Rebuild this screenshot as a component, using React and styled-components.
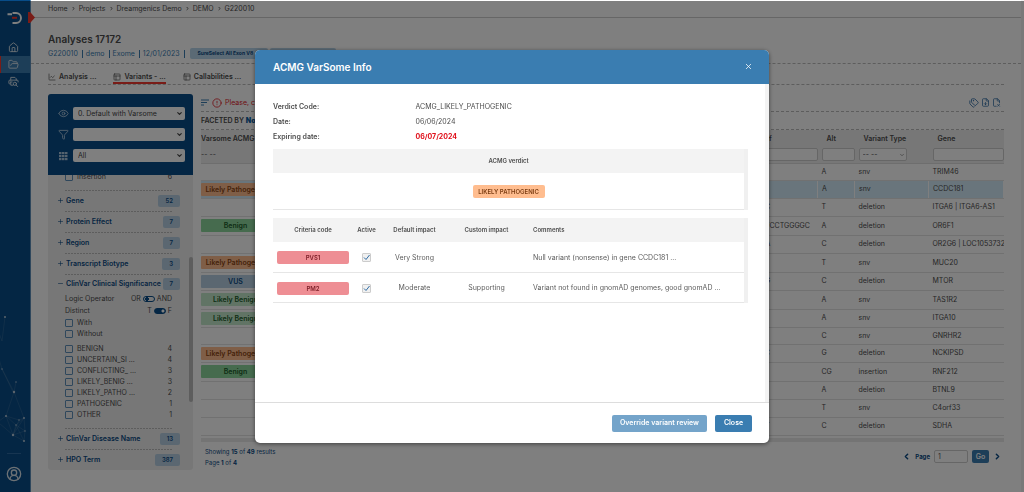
import styled, { createGlobalStyle, css } from "styled-components";
import { House, FolderOpen, CircleUserRound, PanelsTopLeft, ChartLine, Eye, Filter, Tags, FileDown, FileX2, ChevronLeft, ChevronRight, ChevronDown, X, Plus, Minus, CircleAlert } from "lucide-react";

const crumbs = ["Home", "Projects", "Dreamgenics Demo", "DEMO", "G220010"];

const tabs = [
  { label: "Analysis ...", icon: ChartLine },
  { label: "Variants - ...", icon: PanelsTopLeft, active: true },
  { label: "Callabilities ...", icon: PanelsTopLeft },
];

const facets = [
  { name: "Gene", count: 52 },
  { name: "Protein Effect", count: 7 },
  { name: "Region", count: 7 },
  { name: "Transcript Biotype", count: 3 },
];

const lastFacets = [
  { name: "ClinVar Disease Name", count: 13 },
  { name: "HPO Term", count: 387 },
];

const significances = [
  { name: "BENIGN", count: 4 },
  { name: "UNCERTAIN_SI ...", count: 4 },
  { name: "CONFLICTING_ ...", count: 3 },
  { name: "LIKELY_BENIG ...", count: 3 },
  { name: "LIKELY_PATHO ...", count: 2 },
  { name: "PATHOGENIC", count: 1 },
  { name: "OTHER", count: 1 },
];

const variants = [
  { ref: "G", alt: "A", type: "snv", gene: "TRIM46", size: "short" },
  { verdict: "Likely Pathogenic", ref: "G", alt: "A", type: "snv", gene: "CCDC181", selected: true },
  { ref: "CTC", alt: "T", type: "deletion", gene: "ITGA6 | ITGA6-AS1" },
  { verdict: "Benign", ref: "AGTCCTGGGGC", alt: "A", type: "deletion", gene: "OR6F1", size: "tall" },
  { ref: "CCA", alt: "C", type: "deletion", gene: "OR2G6 | LOC105373277" },
  { verdict: "Likely Pathogenic", ref: "C", alt: "T", type: "snv", gene: "MUC20", size: "tall" },
  { verdict: "VUS", ref: "CTG", alt: "C", type: "deletion", gene: "MTOR" },
  { verdict: "Likely Benign", ref: "G", alt: "A", type: "snv", gene: "TAS1R2", size: "tall" },
  { verdict: "Likely Benign", ref: "G", alt: "A", type: "snv", gene: "ITGA10" },
  { ref: "T", alt: "C", type: "snv", gene: "GNRHR2", size: "short" },
  { verdict: "Likely Pathogenic", ref: "GTC", alt: "G", type: "deletion", gene: "NCKIPSD" },
  { verdict: "Benign", ref: "C", alt: "CG", type: "insertion", gene: "RNF212", size: "tall" },
  { ref: "AT", alt: "A", type: "deletion", gene: "BTNL9" },
  { ref: "C", alt: "T", type: "snv", gene: "C4orf33" },
  { ref: "CTT", alt: "C", type: "deletion", gene: "SDHA" },
];

const criteria = [
  { code: "PVS1", impact: "Very Strong", custom: "", comment: "Null variant (nonsense) in gene CCDC181 ..." },
  { code: "PM2", impact: "Moderate", custom: "Supporting", comment: "Variant not found in gnomAD genomes, good gnomAD ..." },
];

const Logo = () => (
  <svg width="16" height="14" viewBox="0 0 16 14" fill="none">
    <path d="M0.500 3.200h4.500M5.500 2h3.500a5 5 0 0 1 0 10H5.500" stroke="#fff" strokeWidth="1.900" />
    <path d="M5 6.800h5" stroke="#f2392f" strokeWidth="2" />
  </svg>
);

const ReportSearch = () => (
  <svg width="11" height="11" viewBox="0 0 24 24" fill="none" stroke="currentColor" strokeWidth="2" strokeLinecap="round" strokeLinejoin="round">
    <path d="M6 9V3h9l3 3v3M11 20H6v-6M4 17H3a1 1 0 0 1-1-1v-5a2 2 0 0 1 2-2h16a2 2 0 0 1 2 2v2" />
    <path d="M5 13h4" />
    <circle cx="15" cy="17" r="3.500" />
    <path d="m18 20 3 3" />
  </svg>
);

const GridIcon = () => (
  <svg width="10" height="10" viewBox="0 0 10 10" fill="currentColor">
    {[1, 4, 7].map((y) => [0, 3, 6].map((x) => <rect key={`${x}-${y}`} x={x + 1} y={y} width="2.500" height="2.200" />))}
  </svg>
);

const Network = () => (
  <svg width="30" height="150" viewBox="0 0 30 150" stroke="#5f88ab" strokeWidth="0.3" fill="none">
    <path d="M6 14 3 38M3 38 0 30M3 66 0 56M3 66l12 23M17 79l-2 10M3 66 14 89M15 89 7 113M15 89l10 26M7 113l7 19M7 113l10 9M7 113 0 118M14 132l3-10M14 132l11-17M14 132l12-4M14 132l11 6M17 122l8-7M17 122l9 6M17 122l8 16M25 115l1 13M26 128l-1 10M20 117l5-2M20 117 14 132M7 113l13 4M14 132 0 120" />
    <g fill="#b5c8da" stroke="none">
      <circle cx="6" cy="14" r="1" />
      <circle cx="3" cy="66" r="0.7" />
      <circle cx="17" cy="79" r="0.7" />
      <circle cx="15" cy="89" r="1.2" />
      <circle cx="7" cy="113" r="1" />
      <circle cx="14" cy="132" r="1.2" />
      <circle cx="17" cy="122" r="0.7" />
      <circle cx="20" cy="117" r="0.7" />
      <circle cx="25" cy="115" r="0.9" />
      <circle cx="26" cy="128" r="0.7" />
      <circle cx="25" cy="138" r="1" />
    </g>
  </svg>
);

const FacetRow = ({ name, count, open }) => (
  <Facet $open={open}>
    <FacetToggle type="button">
      {open ? <Minus size={7} /> : <Plus size={7} />}
      {name}
    </FacetToggle>
    <Count>{count}</Count>
  </Facet>
);

const App = () => {
  return (
    <>
      <GlobalStyle />
      <Page>
        <Sidebar>
          <LogoBox><Logo /><Marker /></LogoBox>
          <NavItem href="#home" aria-label="Home"><House size={11} /></NavItem>
          <NavItem href="#projects" aria-label="Projects" $active><FolderOpen size={11} /></NavItem>
          <NavItem href="#search" aria-label="Search"><ReportSearch /></NavItem>
          <SidebarFoot>
            <Network />
            <Rule />
            <CircleUserRound size={16} strokeWidth={2} />
          </SidebarFoot>
        </Sidebar>
        <Main>
          <Breadcrumb>
            {crumbs.map((crumb, i) => (
              <span key={crumb}>
                {i > 0 && <ChevronRight size={5} strokeWidth={4} />}
                <a href={`#${crumb}`}>{crumb}</a>
              </span>
            ))}
          </Breadcrumb>
          <Heading>
            <h1>Analyses 17172</h1>
            <Meta>
              <span>G220010</span>
              <span>demo</span>
              <span>Exome</span>
              <span>12/01/2023</span>
              <Kit>SureSelect All Exon V8</Kit>
              <Kit />
            </Meta>
          </Heading>
          <Tabs>
            {tabs.map(({ label, icon: Icon, active }) => (
              <Tab key={label} href="#tab" $active={active}>
                <Icon size={8} />
                {label}
              </Tab>
            ))}
          </Tabs>
          <Content>
            <Filters>
              <FilterBox>
                <FilterLine>
                  <Eye size={11} />
                  <SelectWrap>
                    <select aria-label="View"><option>0. Default with Varsome</option></select>
                    <ChevronDown size={7} strokeWidth={4} />
                  </SelectWrap>
                </FilterLine>
                <FilterLine>
                  <Filter size={11} />
                  <SelectWrap>
                    <select aria-label="Filter"><option></option></select>
                    <ChevronDown size={7} strokeWidth={4} />
                  </SelectWrap>
                </FilterLine>
                <FilterLine>
                  <GridIcon />
                  <SelectWrap>
                    <select aria-label="Group"><option>All</option></select>
                    <ChevronDown size={7} strokeWidth={4} />
                  </SelectWrap>
                </FilterLine>
              </FilterBox>
              <FacetList>
                <CutOff>
                  <Option><input type="checkbox" />Insertion<b>6</b></Option>
                </CutOff>
                {facets.map((facet) => <FacetRow key={facet.name} {...facet} />)}
                <FacetRow name="ClinVar Clinical Significance" count={7} open />
                <SwitchLine>
                  Logic Operator
                  <label>OR<input type="checkbox" role="switch" />AND</label>
                </SwitchLine>
                <SwitchLine>
                  Distinct
                  <label>T<input type="checkbox" role="switch" defaultChecked />F</label>
                </SwitchLine>
                <Option><input type="checkbox" />With</Option>
                <Option><input type="checkbox" />Without</Option>
                <OptionGroup>
                  {significances.map(({ name, count }) => (
                    <Option key={name}><input type="checkbox" />{name}<b>{count}</b></Option>
                  ))}
                </OptionGroup>
                {lastFacets.map((facet) => <FacetRow key={facet.name} {...facet} />)}
                <Thumb />
              </FacetList>
            </Filters>
            <Results>
              <Toolbar>
                <SortIcon width="8" height="7" viewBox="0 0 8 7"><path d="M0 1h8M0 3.500h6M0 6h3" /></SortIcon>
                <CircleAlert size={10} />
                <p>Please, check</p>
                <Tools>
                  <Tags size={10} />
                  <FileDown size={9} />
                  <FileX2 size={9} />
                </Tools>
              </Toolbar>
              <Faceted>FACETED BY <b>None</b></Faceted>
              <VariantTable>
                <colgroup>
                  <col width="69" />
                  <col />
                  <col width="66" />
                  <col width="37" />
                  <col width="74" />
                  <col width="75" />
                </colgroup>
                <thead>
                  <tr>
                    <th>Varsome ACMG V</th>
                    <th></th>
                    <th>Ref</th>
                    <th>Alt</th>
                    <th>Variant Type</th>
                    <th>Gene</th>
                  </tr>
                  <tr>
                    <td>-- --</td>
                    <td></td>
                    <td><input aria-label="Ref" /></td>
                    <td><input aria-label="Alt" /></td>
                    <td>
                      <TypeSelect>
                        <select aria-label="Variant Type"><option>-- --</option></select>
                        <ChevronDown size={6} />
                      </TypeSelect>
                    </td>
                    <td><input aria-label="Gene" /></td>
                  </tr>
                </thead>
                <tbody>
                  {variants.map((row) => (
                    <VariantRow key={row.gene} $selected={row.selected} $size={row.size}>
                      <td>{row.verdict && <Verdict $kind={row.verdict}>{row.verdict}</Verdict>}</td>
                      <td></td>
                      <td>{row.ref}</td>
                      <td>{row.alt}</td>
                      <td>{row.type}</td>
                      <td>{row.gene}</td>
                    </VariantRow>
                  ))}
                </tbody>
              </VariantTable>
              <ScrollTrack />
              <Pager>
                <Summary>
                  <p>Showing <b>15</b> of <b>49</b> results</p>
                  <p>Page <b>1</b> of <b>4</b></p>
                </Summary>
                <ChevronLeft size={9} strokeWidth={4} />
                <label htmlFor="page">Page</label>
                <input id="page" defaultValue="1" />
                <GoButton type="button">Go</GoButton>
                <ChevronRight size={9} strokeWidth={4} />
              </Pager>
            </Results>
          </Content>
        </Main>
      </Page>
      <Overlay>
        <Modal role="dialog" aria-labelledby="modal-title">
          <ModalHeader>
            <h2 id="modal-title">ACMG VarSome Info</h2>
            <button type="button" aria-label="Dismiss"><X size={9} strokeWidth={2} /></button>
          </ModalHeader>
          <ModalBody>
            <Details>
              <dt>Verdict Code:</dt>
              <dd>ACMG_LIKELY_PATHOGENIC</dd>
              <dt>Date:</dt>
              <dd>06/06/2024</dd>
              <dt>Expiring date:</dt>
              <Expired>06/07/2024</Expired>
            </Details>
            <Panel>
              <InfoTable>
                <thead>
                  <tr><th>ACMG verdict</th></tr>
                </thead>
                <tbody>
                  <InfoRow $height={37}>
                    <td><Tag $kind="likely">LIKELY PATHOGENIC</Tag></td>
                  </InfoRow>
                </tbody>
              </InfoTable>
            </Panel>
            <Panel>
              <InfoTable>
                <colgroup>
                  <col width="80" />
                  <col width="27" />
                  <col width="69" />
                  <col width="75" />
                  <col />
                </colgroup>
                <thead>
                  <tr>
                    <th>Criteria code</th>
                    <th>Active</th>
                    <th>Default impact</th>
                    <th>Custom impact</th>
                    <Comment as="th">Comments</Comment>
                  </tr>
                </thead>
                <tbody>
                  {criteria.map(({ code, impact, custom, comment }) => (
                    <InfoRow key={code} $height={30}>
                      <td><Tag $kind="pathogenic">{code}</Tag></td>
                      <td>
                        <Tick>
                          <input type="checkbox" aria-label={`${code} active`} defaultChecked />
                          <svg width="7" height="7" viewBox="0 0 7 7"><path d="M1 3.500l2 2L6.500 1" /></svg>
                        </Tick>
                      </td>
                      <td>{impact}</td>
                      <td>{custom}</td>
                      <Comment>{comment}</Comment>
                    </InfoRow>
                  ))}
                </tbody>
              </InfoTable>
            </Panel>
          </ModalBody>
          <ModalFooter>
            <ModalButton type="button" disabled>Override variant review</ModalButton>
            <ModalButton type="button">Close</ModalButton>
          </ModalFooter>
        </Modal>
      </Overlay>
    </>
  );
};

export default App;

const GlobalStyle = createGlobalStyle`
* {
  box-sizing: border-box;
}
body {
  margin: 0;
  background: #fff;
  color: #4c4c4c;
  font-family: Inter, sans-serif;
  font-size: 7px;
  line-height: 10px;
}
h1, h2, p, dl, dd {
  margin: 0;
}
input, select, button {
  font: inherit;
  color: inherit;
  margin: 0;
}
a {
  color: inherit;
  text-decoration: none;
}
svg {
  flex: none;
}
`;

const check = css`
  appearance: none;
  width: 8px;
  height: 8px;
  border: 1px solid #5f8fb8;
  border-radius: 1px;
`;

const Page = styled.div`
  display: flex;
  min-height: 100vh;
`;

const Sidebar = styled.nav`
  width: 31px;
  flex: none;
  display: flex;
  flex-direction: column;
  background: #084c88;
  border-right: 1px solid #5f8fb8;
  color: #d8e2ea;
`;

const LogoBox = styled.div`
  position: relative;
  height: 39px;
  padding: 11px 7px;
`;

const Marker = styled.span`
  position: absolute;
  left: 28px;
  top: 12px;
  width: 7px;
  height: 11px;
  background: #f2392f;
  clip-path: polygon(0 0, 30% 0, 100% 50%, 30% 100%, 0 100%);
`;

const NavItem = styled.a`
  display: flex;
  align-items: center;
  justify-content: center;
  height: 17px;
  padding-right: 5px;
  border-left: 1px solid ${({ $active }) => ($active ? "#f2392f" : "transparent")};
  background: ${({ $active }) => ($active ? "#3a7db1" : "transparent")};
`;

const SidebarFoot = styled.div`
  margin-top: auto;
  display: flex;
  flex-direction: column;
  align-items: center;
  padding-bottom: 10px;
  padding-right: 2px;
`;

const Rule = styled.hr`
  width: 14px;
  margin: 0 0 12px;
  border: 0;
  border-top: 1px solid #2f6ba3;
`;

const Main = styled.main`
  flex: 1;
  min-width: 0;
  border-right: 3px solid #f3f3f3;
`;

const Breadcrumb = styled.nav`
  height: 18px;
  display: flex;
  align-items: center;
  padding-left: 17px;
  border-bottom: 1px solid #ccc;

  span {
    display: flex;
    align-items: center;
  }
  svg {
    margin: 0 3px;
  }
`;

const Heading = styled.header`
  height: 46px;
  padding: 14px 17px 0;
  border-bottom: 1px dashed #bbb;

  h1 {
    font-size: 10px;
    line-height: 14px;
    font-weight: 600;
  }
`;

const Meta = styled.div`
  display: flex;
  align-items: center;
  height: 15px;
  color: #3a7db1;
  white-space: nowrap;

  > span {
    padding-right: 4px;
    margin-right: 3px;
    border-right: 1px solid #3a7db1;
    line-height: 8px;
  }
`;

const Kit = styled.b`
  width: 78px;
  height: 11px;
  margin-left: 2px;
  padding-left: 8px;
  border-radius: 2px;
  background: #b6d4ea;
  color: #0b4a84;
  font-size: 5px;

  & + & {
    width: 66px;
  }
`;

const Tabs = styled.nav`
  display: flex;
  gap: 17px;
  height: 21px;
  margin: 0 17px;
  border-bottom: 1px dashed #bbb;
`;

const Tab = styled.a`
  display: flex;
  align-items: center;
  gap: 3px;
  padding-top: 8px;
  font-weight: 600;
  border-bottom: 2px solid ${({ $active }) => ($active ? "#f2392f" : "transparent")};
`;

const Content = styled.div`
  display: flex;
  align-items: flex-start;
  gap: 8px;
  padding: 9px 17px 0;
`;

const Filters = styled.aside`
  width: 145px;
  flex: none;
  border-radius: 3px;
  overflow: hidden;
  background: #efefef;
`;

const FilterBox = styled.div`
  display: flex;
  flex-direction: column;
  gap: 9px;
  height: 81px;
  padding: 13px 8px 0 9px;
  background: #084c88;
  color: #a9c4dc;
`;

const FilterLine = styled.div`
  display: grid;
  grid-template-columns: 12px 1fr;
  align-items: center;
  justify-items: center;
  column-gap: 4px;
  height: 12px;
`;

const SelectWrap = styled.div`
  width: 100%;
  position: relative;
  color: #444;

  select {
    display: block;
    width: 100%;
    height: 13px;
    padding: 0 5px;
    border: 0;
    border-radius: 2px;
    background: #fff;
    appearance: none;
  }
  svg {
    position: absolute;
    right: 2px;
    top: 3px;
  }
`;

const FacetList = styled.div`
  position: relative;
  padding: 0 21px 0 9px;
`;

const CutOff = styled.div`
  height: 15px;
  overflow: hidden;
  display: flex;
  flex-direction: column-reverse;
  padding-bottom: 8px;
`;

const Facet = styled.div`
  display: flex;
  align-items: center;
  justify-content: space-between;
  height: ${({ $open }) => ($open ? 19 : 21)}px;
  margin-right: -8px;
  color: #0b4a84;
  font-weight: 600;
  background: repeating-linear-gradient(90deg, #bbb 0 2px, transparent 2px 3px) 8px 0 / 107px 1px no-repeat;
`;

const FacetToggle = styled.button`
  display: flex;
  align-items: center;
  gap: 2px;
  padding: 0;
  border: 0;
  background: none;
  white-space: nowrap;
`;

const Count = styled.span`
  height: 12px;
  padding: 1px 7px;
  border-radius: 2px;
  background: #b6cfe3;
  font-size: 6px;
`;

const Option = styled.label`
  display: flex;
  align-items: center;
  gap: 4px;
  height: 11px;
  padding-left: 8px;

  input {
    ${check}
  }
  b {
    margin-left: auto;
    font-weight: 400;
  }
`;

const OptionGroup = styled.div`
  padding: 4px 0 8px;
`;

const SwitchLine = styled.div`
  display: flex;
  align-items: center;
  justify-content: space-between;
  height: 12px;
  padding-left: 8px;

  label {
    display: flex;
    align-items: center;
    gap: 2px;
  }
  input {
    appearance: none;
    width: 12px;
    height: 6px;
    border: 1px solid #084c88;
    border-radius: 3px;
    background: radial-gradient(circle at 3px 2px, #084c88 2px, transparent 2px);
  }
  input:checked {
    background: radial-gradient(circle at 8px 2px, #fff 1px, #084c88 2px);
  }
`;

const Thumb = styled.span`
  position: absolute;
  right: 0;
  top: 82px;
  width: 4px;
  height: 145px;
  border-radius: 2px;
  background: #bbb;
`;

const Results = styled.section`
  flex: 1;
  min-width: 0;
`;

const Toolbar = styled.div`
  display: flex;
  align-items: center;
  gap: 3px;
  height: 18px;
  color: #e0202a;
  border-bottom: 1px dashed #bbb;
`;

const SortIcon = styled.svg`
  stroke: #3a7db1;
  stroke-width: 1;
`;

const Tools = styled.div`
  display: flex;
  gap: 2px;
  margin-left: auto;
  padding-right: 3px;
  color: #2f6ba3;
`;

const Faceted = styled.div`
  height: 18px;
  line-height: 17px;
  font-weight: 600;
  border-bottom: 1px dashed #bbb;

  b {
    color: #0b5c9e;
  }
`;

const VariantTable = styled.table`
  width: 100%;
  table-layout: fixed;
  border-collapse: collapse;

  th, td {
    padding: 0 0 0 4px;
    text-align: left;
    white-space: nowrap;
    overflow: hidden;
  }
  th {
    height: 17px;
    padding-left: 9px;
    font-weight: 600;
  }
  th:first-child, td:first-child {
    padding-left: 0;
  }
  thead {
    background: #efefef;
  }
  thead td {
    height: 16px;
    border-bottom: 1px solid #ddd;
  }
  input, select {
    display: block;
    width: 100%;
    height: 13px;
    padding: 0 3px;
    border: 1px solid #ccc;
    border-radius: 2px;
    background: #fff;
    appearance: none;
  }
`;

const TypeSelect = styled.div`
  position: relative;
  width: 48px;

  svg {
    position: absolute;
    right: 2px;
    top: 4px;
  }
`;

const rowHeights = { short: 17, tall: 19 };

const VariantRow = styled.tr`
  height: ${({ $size }) => rowHeights[$size] || 18}px;
  background: ${({ $selected }) => ($selected ? "#d3ebf8" : "transparent")};

  td {
    border-bottom: 1px solid #e2e2e2;
    border-right: ${({ $selected }) => ($selected ? "1px solid #fff" : "0")};
  }
`;

const verdictColors = {
  "Likely Pathogenic": ["#ffbd8f", "#8a4413"],
  "Benign": ["#8cd79c", "#1d5b2b"],
  "VUS": ["#b6cfe3", "#0b4a84"],
  "Likely Benign": ["#c2e8ca", "#1d5b2b"],
};

const Verdict = styled.span`
  display: block;
  height: 13px;
  line-height: 13px;
  text-align: center;
  font-weight: 600;
  border-radius: 1px;
  background: ${({ $kind }) => verdictColors[$kind][0]};
  color: ${({ $kind }) => verdictColors[$kind][1]};
`;

const ScrollTrack = styled.div`
  height: 4px;
  margin-top: 2px;
  background: #e8e8e8;
`;

const Pager = styled.footer`
  display: flex;
  align-items: center;
  gap: 4px;
  height: 30px;
  padding: 0 2px 0 4px;
  color: #0b4a84;

  label {
    font-size: 6px;
    font-weight: 700;
  }
  input {
    width: 34px;
    height: 13px;
    padding: 0 3px;
    border: 1px solid #ccc;
    border-radius: 2px;
    background: #fff;
    color: #555;
  }
`;

const Summary = styled.div`
  margin-right: auto;
  font-size: 6px;
  line-height: 11px;
`;

const GoButton = styled.button`
  width: 17px;
  height: 13px;
  padding: 0;
  border: 0;
  border-radius: 2px;
  background: #3a7db1;
  color: #fff;
  font-weight: 600;
`;

const Overlay = styled.div`
  position: fixed;
  inset: 1px 0 0;
  display: flex;
  align-items: center;
  justify-content: center;
  background: rgba(0, 0, 0, 0.5);
`;

const Modal = styled.section`
  display: flex;
  flex-direction: column;
  width: 514px;
  height: 80vh;
  border-radius: 5px;
  overflow: hidden;
  background: #fff;
  box-shadow: 0 1px 4px rgba(0, 0, 0, 0.5);
`;

const ModalHeader = styled.header`
  display: flex;
  align-items: center;
  justify-content: space-between;
  height: 34px;
  flex: none;
  padding: 0 16px 0 18px;
  background: #3a7db1;
  color: #fff;

  h2 {
    font-size: 10px;
    font-weight: 600;
  }
  button {
    display: flex;
    padding: 0;
    border: 0;
    background: none;
  }
`;

const ModalBody = styled.div`
  flex: 1;
  padding: 15px 17px 0 18px;
  border-right: 4px solid #f3f3f3;
`;

const Details = styled.dl`
  display: grid;
  grid-template-columns: 3fr 7fr;
  line-height: 15px;
  margin-bottom: 5px;

  dt {
    font-weight: 600;
  }
`;

const Expired = styled.dd`
  color: #e0101a;
  font-weight: 700;
`;

const Panel = styled.div`
  margin-bottom: 8px;
  border-right: 4px solid #f0f0f0;
`;

const InfoTable = styled.table`
  width: 100%;
  table-layout: fixed;
  border-collapse: collapse;
  text-align: center;

  th {
    height: 24px;
    padding: 0;
    background: #f3f3f3;
    font-size: 6px;
    font-weight: 600;
  }
`;

const InfoRow = styled.tr`
  height: ${({ $height }) => $height}px;

  td {
    padding: 2px 4px 0;
    border-bottom: 1px solid #e6e6e6;
    color: #5c5c5c;
  }
`;

const Tick = styled.label`
  position: relative;
  display: block;
  width: 9px;
  height: 9px;
  margin: 0 auto;

  input {
    ${check}
    display: block;
    width: 9px;
    height: 9px;
    border-color: #ccc;
    background: #f0f0f0;
  }
  svg {
    position: absolute;
    left: 1px;
    top: 1px;
    fill: none;
    stroke: #2f6ba3;
  }
`;

const Comment = styled.td`
  && {
    padding-left: 9px;
    text-align: left;
  }
`;

const tagColors = {
  likely: ["#ffbd8f", "#7c3d12"],
  pathogenic: ["#ee8e94", "#7c1f28"],
};

const Tag = styled.span`
  display: block;
  width: 72px;
  height: 13px;
  margin: 0 auto;
  line-height: 13px;
  border-radius: 2px;
  font-size: 6px;
  font-weight: 600;
  background: ${({ $kind }) => tagColors[$kind][0]};
  color: ${({ $kind }) => tagColors[$kind][1]};
`;

const ModalFooter = styled.footer`
  display: flex;
  align-items: center;
  justify-content: flex-end;
  gap: 8px;
  height: 41px;
  flex: none;
  padding-right: 17px;
  border-top: 1px solid #ddd;
`;

const ModalButton = styled.button`
  height: 17px;
  min-width: 37px;
  padding: 0 8px;
  border: 0;
  border-radius: 2px;
  background: #3a7db1;
  color: #fff;
  font-weight: 600;

  &:disabled {
    background: #74a4ca;
  }
`;
